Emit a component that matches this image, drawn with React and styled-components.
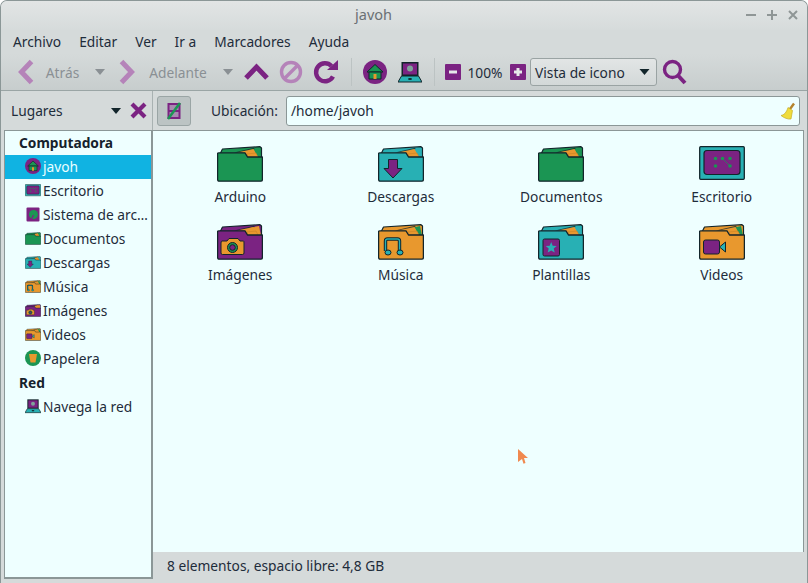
import React from "react";
import styled, { createGlobalStyle } from "styled-components";

const P = "#7b2382", G = "#1b9553", T = "#28b0b4", O = "#e8982e", K = "#12252b", D = "#1e2c3a";

const Global = createGlobalStyle`
  html, body { margin: 0; padding: 0; background: #fff; }
  body { font-family: "Noto Sans", "Open Sans", sans-serif; font-size: 13.75px; color: ${D}; }
`;

const Window = styled.div`
  position: relative; width: 808px; height: 583px; box-sizing: border-box; overflow: hidden;
  display: flex; flex-direction: column;
  background: #d5dada; border: 1px solid #8b9797; border-bottom: 0; border-radius: 7px 7px 0 0;
`;
const TitleBar = styled.div`
  height: 29px; flex: none; display: flex; align-items: center; padding: 0 0 4px 354px; box-sizing: border-box;
  background: linear-gradient(#e2e5e5, #d6dbdb); font-size: 14.5px;
`;
const TitleText = styled.span` flex: 1; color: #6a7074; `;
const WinButtons = styled.div` display: flex; gap: 7px; padding: 2px 7px 0 0; `;
const WinButton = styled.span` width: 14px; height: 14px; display: flex; align-items: center; justify-content: center; `;

const MenuBar = styled.div` height: 24px; flex: none; box-sizing: border-box; display: flex; align-items: center; padding: 0 0 2px 12px; gap: 18px; `;
const MenuItem = styled.span` color: ${D}; `;

const Toolbar = styled.div`
  height: 37px; flex: none; display: flex; align-items: center; padding-left: 16px; box-sizing: border-box;
  background: linear-gradient(#d5dada, #c7cdcd); border-bottom: 1px solid #9aa5a5;
`;
const Slot = styled.div`
  flex: none; width: ${p => p.$w}px; margin-left: ${p => p.$m || 0}px;
  display: flex; align-items: center; justify-content: center; color: ${p => p.$muted ? "#8a9094" : D};
  white-space: nowrap;
`;
const Sep = styled.div` flex: none; width: 1px; height: 28px; background: #bcc3c3; margin-left: ${p => p.$m}px; `;
const Combo = styled.div`
  flex: none; width: 127px; height: 28px; margin-left: 4px; box-sizing: border-box; border: 1px solid #9aa3a3; border-radius: 3px;
  background: linear-gradient(#e2e5e5, #d3d8d8); display: flex; align-items: center; justify-content: space-between; padding: 0 6px 0 4px;
`;

const PathRow = styled.div` height: 39px; flex: none; display: flex; background: #d5dada; `;
const SideHead = styled.div`
  width: 152px; flex: none; box-sizing: border-box; border-right: 1px solid #a9b2b2;
  display: flex; align-items: center; padding-left: 10px;
`;
const SideTitle = styled.span` flex: 1; `;
const CloseSlot = styled.span` display: flex; margin: 0 5px 0 9px; `;
const Toggle = styled.div`
  width: 34px; height: 30px; margin-left: 4px; align-self: center; box-sizing: border-box; flex: none;
  background: #bcc4c4; border: 1px solid #9aa5a5; border-radius: 3px; display: flex; align-items: center; justify-content: center;
`;
const PathLabel = styled.span` margin-left: 20px; align-self: center; width: 75px; flex: none; `;
const Entry = styled.div`
  width: 514px; height: 30px; align-self: center; box-sizing: border-box; flex: none; background: #eeffff;
  border: 1px solid #8b9797; border-radius: 3px; display: flex; align-items: center; justify-content: space-between; padding: 0 3px 0 4px;
`;

const Body = styled.div` flex: 1; min-height: 0; display: flex; padding: 0 3px 4px; `;
const Sidebar = styled.div`
  width: 149px; flex: none; box-sizing: border-box; background: #eeffff; border: 1px solid #8b9797; border-width: 1px 2px 2px 1px;
`;
const Heading = styled.div` height: 24px; line-height: 24px; padding-left: 14px; font-weight: 700; color: #15222c; box-sizing: border-box; `;
const Place = styled.div`
  height: 24px; box-sizing: border-box; display: flex; align-items: center; padding: 0 0 2px 20px; gap: 2px; white-space: nowrap;
  background: ${p => p.$active ? "#10b3e2" : "transparent"}; color: ${p => p.$active ? "#eaffff" : D};
`;
const PlaceIcon = styled.span` width: 16px; height: 16px; display: flex; align-items: center; justify-content: center; flex: none; `;

const Right = styled.div` flex: 1; min-width: 0; display: flex; flex-direction: column; `;
const IconView = styled.div`
  flex: 1; background: #eeffff; border-top: 1px solid #8b9797; border-right: 1px solid #8b9797;
  display: grid; grid-template-columns: repeat(4, 160.5px); grid-auto-rows: 78px; align-content: start; padding: 15px 0 0 7px;
`;
const Tile = styled.div` display: flex; flex-direction: column; align-items: center; `;
const TileLabel = styled.span` margin-top: 4px; line-height: 22px; `;
const Status = styled.div` height: 27px; flex: none; display: flex; align-items: center; padding-left: 14px; background: #d5dada; `;
const Pointer = styled.svg` position: absolute; left: 516px; top: 447px; `;

const Chevron = ({ dir }) => (
  <svg width="17" height="26" viewBox="0 0 17 26"><path d={dir === "l" ? "M14.500 2.500 4.500 13l10 10.500" : "M2.500 2.500 12.500 13l-10 10.500"} fill="none" stroke="#b583b9" strokeWidth="5" /></svg>
);
const Drop = ({ c = "#8a9094", w = 10 }) => <svg width={w} height="6" viewBox="0 0 10 6"><path d="M0 0h10L5 6z" fill={c} /></svg>;
const Up = () => <svg width="25" height="18" viewBox="0 0 25 18"><path d="M2 15 12.500 4 23 15" fill="none" stroke={P} strokeWidth="5" /></svg>;
const Stop = () => (
  <svg width="24" height="24" viewBox="0 0 24 24"><circle cx="12" cy="12" r="9.500" fill="none" stroke="#b583b9" strokeWidth="3.400" /><path d="M5.500 18.500 18.500 5.500" stroke="#b583b9" strokeWidth="3.400" /></svg>
);
const Reload = () => (
  <svg width="26" height="26" viewBox="0 0 26 26"><path d="M20 17.500A9 9 0 1 1 18.500 7" fill="none" stroke={P} strokeWidth="4.400" /><path d="M14 11h11V1z" fill={P} /></svg>
);
const Home = ({ s = 24 }) => (
  <svg width={s} height={s} viewBox="0 0 24 24"><circle cx="12" cy="12" r="12" fill={P} /><path d="M12 4.500 20 12H4z" fill={G} stroke={K} strokeWidth="1" /><path d="M6 12h12v7H6z" fill={G} stroke={K} strokeWidth="1" /><path d="M10.500 14h3v5h-3z" fill={O} /></svg>
);
const Laptop = ({ s = 24 }) => (
  <svg width={s} height={s} viewBox="0 0 24 24"><path d="M3.500 2h17v14h-17z" fill={K} /><path d="M5 3.500h14v11H5z" fill={P} /><circle cx="12" cy="8.500" r="3" fill="#7fa39a" /><path d="M3.500 16h17L24 22H0z" fill={T} stroke={K} strokeWidth="1" /><ellipse cx="12" cy="19" rx="2" ry="1" fill={K} /></svg>
);
const ZoomBtn = ({ plus }) => (
  <svg width="16" height="16" viewBox="0 0 16 16"><rect width="16" height="16" rx="1" fill={P} /><path d={plus ? "M8 4v8M4 8h8" : "M4 8h8"} stroke="#e6e9e9" strokeWidth="3" /></svg>
);
const Search = () => (
  <svg width="25" height="26" viewBox="0 0 25 26"><circle cx="10.500" cy="10.500" r="8" fill="none" stroke={P} strokeWidth="3.400" /><path d="M16 16.500 23 24" stroke={P} strokeWidth="4" /></svg>
);
const CloseX = () => <svg width="17" height="17" viewBox="0 0 17 17"><path d="M2 2 15 15M15 2 2 15" stroke={P} strokeWidth="4.200" /></svg>;
const ToggleIcon = () => (
  <svg width="14" height="18" viewBox="0 0 14 18"><path d="M1.500 2h11v14h-11z" fill="#a78ab0" stroke={P} strokeWidth="2" /><path d="M1.500 9h11" stroke={P} strokeWidth="2" /><path d="M1 17 13 1" stroke={G} strokeWidth="2.600" /></svg>
);
const Broom = () => (
  <svg width="16" height="18" viewBox="0 0 16 18"><path d="M10 7 14 1.500" stroke="#b5842e" strokeWidth="2.400" /><path d="M8 5.500l4.500 3L11 17c-3 .5-7-1-10-3.500 3-.5 5.500-3 7-8z" fill="#efdc3c" stroke="#c6ae25" strokeWidth=".7" /></svg>
);

const Folder = ({ face, paper = G, width = 46, height = 36, children }) => (
  <svg width={width} height={height} viewBox="0 0 46 36">
    <path d="M3.500 7 5.500 3 43 .7 44.500 2V12H3.500z" fill={face} stroke={K} strokeWidth="1.200" strokeLinejoin="round" />
    <path d="M17 6.500 37 1.800 40 7H30z" fill={K} opacity=".75" />
    <path d="M33 4 42 2 44 11.500H38z" fill={paper} />
    <path d="M20 6.500 36.500 3 41.500 12H30.500L28 6.800z" fill={O} />
    <path d="M30 8 39 7 41.500 12H31z" fill={O} stroke="#b87a1f" strokeWidth=".4" />
    <path d="M.6 7.500Q.6 6.800 2 6.800H28L30.500 11H45.400V33.500Q45.400 35.200 43.800 35.200H2.200Q.6 35.200 .6 33.500z" fill={face} stroke={K} strokeWidth="1.300" strokeLinejoin="round" />
    {children}
  </svg>
);
const Emblems = {
  down: <path d="M19.500 13.500h-9v9H6L15 32l9-9.500h-4.500z" fill={P} stroke={K} strokeWidth="1" />,
  camera: <g stroke={K} strokeWidth="1"><path d="M5 17h5l2-2.500h9l2 2.500h3.500Q27 17 27 19v10q0 1.500-1.500 1.500h-20Q4 30.500 4 29V19q0-2 1-2z" fill={O} /><circle cx="15.500" cy="23.500" r="5" fill={G} /><circle cx="15.500" cy="23.500" r="2.800" fill={P} /></g>,
  music: <g fill="none"><path d="M7.500 27V17q0-2 2-2h10q2 0 2 2v11" stroke={K} strokeWidth="3.400" /><path d="M7.500 27V17q0-2 2-2h10q2 0 2 2v11" stroke={T} strokeWidth="1.400" /><ellipse cx="10" cy="28.500" rx="3" ry="2.500" fill={T} stroke={K} strokeWidth="1" /><ellipse cx="22" cy="28.500" rx="3" ry="2.500" fill={T} stroke={K} strokeWidth="1" /></g>,
  star: <g><rect x="5" y="15" width="16.500" height="17" rx="1.500" fill={P} stroke={K} strokeWidth="1" /><path d="m13.200 18 1.500 3.800 4 .3-3 2.500 1 4-3.500-2.200-3.500 2.200 1-4-3-2.500 4-.3z" fill={T} /></g>,
  video: <g stroke={K} strokeWidth="1"><rect x="4.500" y="16" width="16" height="14" rx="2" fill={P} /><path d="M20.500 23 26.500 18v10z" fill={T} /></g>,
};
const Desktop = ({ width = 46, height = 36 }) => (
  <svg width={width} height={height} viewBox="0 0 46 36">
    <rect x=".7" y=".7" width="44.600" height="32.600" rx="1" fill={T} stroke={K} strokeWidth="1.300" />
    <rect x="5" y="4.500" width="36" height="24" rx="3" fill={P} stroke={K} strokeWidth="1.200" />
    <g fill={G}><circle cx="16.500" cy="12.500" r="1.800" /><circle cx="23.500" cy="12.500" r="1.800" /><circle cx="31" cy="12.500" r="1.800" /><circle cx="16.500" cy="20" r="1.800" /><circle cx="31" cy="20" r="1.800" /></g>
    <path d="M25 14 31 20" stroke={G} strokeWidth=".7" />
  </svg>
);
const Drive = () => (
  <svg width="14" height="15" viewBox="0 0 14 15"><rect x=".5" y=".5" width="13" height="14" rx="1" fill={P} /><circle cx="7.500" cy="7.500" r="4.500" fill={G} /><path d="M7.500 8 5 13" stroke={P} strokeWidth="1.300" /></svg>
);
const Trash = () => (
  <svg width="16" height="16" viewBox="0 0 16 16"><circle cx="8" cy="8" r="8" fill={G} /><path d="M4 4h8l-1.500 8.500h-5z" fill={O} /></svg>
);

const mini = { width: 16, height: 13 };
const places = [
  ["javoh", <Home s={16} />, true],
  ["Escritorio", <Desktop {...mini} />],
  ["Sistema de arc…", <Drive />],
  ["Documentos", <Folder face={G} {...mini} />],
  ["Descargas", <Folder face={T} paper={T} {...mini}>{Emblems.down}</Folder>],
  ["Música", <Folder face={O} {...mini}>{Emblems.music}</Folder>],
  ["Imágenes", <Folder face={P} paper={O} {...mini}>{Emblems.camera}</Folder>],
  ["Videos", <Folder face={O} {...mini}>{Emblems.video}</Folder>],
  ["Papelera", <Trash />],
];
const tiles = [
  ["Arduino", <Folder face={G} />],
  ["Descargas", <Folder face={T} paper={T}>{Emblems.down}</Folder>],
  ["Documentos", <Folder face={G} />],
  ["Escritorio", <Desktop />],
  ["Imágenes", <Folder face={P} paper={O}>{Emblems.camera}</Folder>],
  ["Música", <Folder face={O}>{Emblems.music}</Folder>],
  ["Plantillas", <Folder face={T} paper={T}>{Emblems.star}</Folder>],
  ["Videos", <Folder face={O}>{Emblems.video}</Folder>],
];

export default function App() {
  return (
    <Window>
      <Global />
      <TitleBar>
        <TitleText>javoh</TitleText>
        <WinButtons>
          {["M2 7h10", "M2 7h10M7 2v10", "M3 3l8 8M11 3l-8 8"].map(d => (
            <WinButton key={d}><svg width="14" height="14" viewBox="0 0 14 14"><path d={d} stroke="#8f9696" strokeWidth="2" /></svg></WinButton>
          ))}
        </WinButtons>
      </TitleBar>
      <MenuBar>
        {["Archivo", "Editar", "Ver", "Ir a", "Marcadores", "Ayuda"].map(m => <MenuItem key={m}>{m}</MenuItem>)}
      </MenuBar>
      <Toolbar>
        <Slot $w={17}><Chevron dir="l" /></Slot>
        <Slot $w={33} $m={12} $muted>Atrás</Slot>
        <Slot $w={10} $m={16}><Drop /></Slot>
        <Slot $w={17} $m={14}><Chevron dir="r" /></Slot>
        <Slot $w={58} $m={13} $muted>Adelante</Slot>
        <Slot $w={10} $m={16}><Drop /></Slot>
        <Slot $w={25} $m={11}><Up /></Slot>
        <Slot $w={24} $m={10}><Stop /></Slot>
        <Slot $w={26} $m={10}><Reload /></Slot>
        <Sep $m={12} />
        <Slot $w={24} $m={11}><Home /></Slot>
        <Slot $w={24} $m={11}><Laptop /></Slot>
        <Sep $m={12} />
        <Slot $w={16} $m={10}><ZoomBtn /></Slot>
        <Slot $w={36} $m={6}>100%</Slot>
        <Slot $w={16} $m={7}><ZoomBtn plus /></Slot>
        <Combo>Vista de icono<Drop c={K} w={11} /></Combo>
        <Slot $w={25} $m={5}><Search /></Slot>
      </Toolbar>
      <PathRow>
        <SideHead>
          <SideTitle>Lugares</SideTitle>
          <Drop c={K} />
          <CloseSlot><CloseX /></CloseSlot>
        </SideHead>
        <Toggle><ToggleIcon /></Toggle>
        <PathLabel>Ubicación:</PathLabel>
        <Entry>/home/javoh<Broom /></Entry>
      </PathRow>
      <Body>
        <Sidebar>
          <Heading>Computadora</Heading>
          {places.map(([t, i, a]) => <Place key={t} $active={a}><PlaceIcon>{i}</PlaceIcon>{t}</Place>)}
          <Heading>Red</Heading>
          <Place><PlaceIcon><Laptop s={16} /></PlaceIcon>Navega la red</Place>
        </Sidebar>
        <Right>
          <IconView>
            {tiles.map(([t, i]) => <Tile key={t}>{i}<TileLabel>{t}</TileLabel></Tile>)}
          </IconView>
          <Status>8 elementos, espacio libre: 4,8 GB</Status>
        </Right>
      </Body>
      <Pointer width="12" height="18" viewBox="0 0 12 18"><path d="M1 1 11 10H7l1.500 5-2 .8L5 11l-4 3z" fill="#f0894f" /></Pointer>
    </Window>
  );
}
